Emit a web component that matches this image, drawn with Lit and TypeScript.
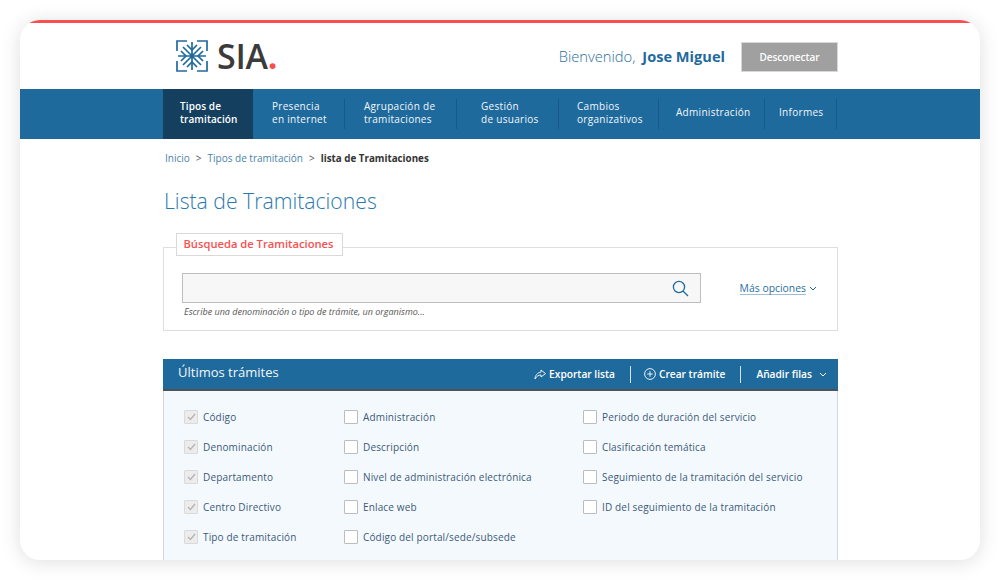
import {css, html, LitElement} from 'lit';
import {customElement} from 'lit/decorators.js';

const NAV = [
  {lines: ['Tipos de', 'tramitación'], width: 90, pad: 17, active: true},
  {lines: ['Presencia', 'en internet'], width: 92, pad: 19},
  {lines: ['Agrupación de', 'tramitaciones'], width: 112, pad: 19},
  {lines: ['Gestión', 'de usuarios'], width: 102, pad: 24},
  {lines: ['Cambios', 'organizativos'], width: 100, pad: 18},
  {lines: ['Administración'], width: 106, pad: 17},
  {lines: ['Informes'], width: 72, pad: 14},
];

const COLUMNS = [
  {width: 160, checked: true, items: ['Código', 'Denominación', 'Departamento', 'Centro Directivo', 'Tipo de tramitación']},
  {width: 239, checked: false, items: ['Administración', 'Descripción', 'Nivel de administración electrónica', 'Enlace web', 'Código del portal/sede/subsede']},
  {width: 240, checked: false, items: ['Periodo de duración del servicio', 'Clasificación temática', 'Seguimiento de la tramitación del servicio', 'ID del seguimiento de la tramitación']},
];

@customElement('app-root')
export class AppRoot extends LitElement {
  static override styles = css`
    :host {
      display: block;
      width: 1000px;
      height: 580px;
      padding: 20px;
      box-sizing: border-box;
      background: #fff;
      font-family: "Open Sans", sans-serif;
      color: #333;
    }

    .window {
      height: 540px;
      border-radius: 20px;
      overflow: hidden;
      background: #fff;
      box-shadow: 0 2px 20px rgba(0, 0, 0, 0.13);
    }

    .strip {
      height: 3px;
      background: #f9504f;
    }

    .top {
      height: 66px;
      width: 675px;
      margin-left: 143px;
      display: flex;
      align-items: center;
      justify-content: space-between;
    }

    .logo {
      display: flex;
      align-items: center;
      gap: 9px;
      margin-left: 13px;
    }

    .logo svg {
      display: block;
    }

    .brand {
      font-size: 34px;
      line-height: 32px;
      font-weight: 600;
      color: #3b3b3b;
      letter-spacing: -0.3px;
    }

    .brand b {
      color: #f9504f;
      font-weight: 700;
    }

    .user {
      display: flex;
      align-items: center;
    }

    .hello {
      font-size: 14.7px;
      font-weight: 300;
      color: #2a6f9f;
      margin-left: -1px;
    }

    .name {
      font-size: 14.6px;
      font-weight: 700;
      color: #1f6a9c;
      margin-left: 7px;
    }

    .logout {
      width: 97px;
      height: 30px;
      margin: 2px 0 0 16px;
      box-sizing: border-box;
      border: 1px solid #d8d8d8;
      background: #a0a0a0;
      color: #fff;
      font-size: 10px;
      font-weight: 600;
      display: flex;
      align-items: center;
      justify-content: center;
    }

    .nav {
      height: 50px;
      background: #1f6a9c;
      padding-left: 143px;
      display: flex;
    }

    .nav-item {
      box-sizing: border-box;
      display: flex;
      flex-direction: column;
      justify-content: center;
      padding-bottom: 3px;
      color: #f2f7fb;
      font-size: 10px;
      line-height: 13px;
      letter-spacing: 0.3px;
      position: relative;
    }

    .nav-item::after {
      content: "";
      position: absolute;
      right: 0;
      top: 10px;
      bottom: 10px;
      width: 1px;
      background: #175a87;
    }

    .nav-item.active {
      background: #143f5f;
      color: #fff;
      font-weight: 600;
      letter-spacing: 0.1px;
    }

    .nav-item.active::after {
      display: none;
    }

    .main {
      width: 675px;
      margin-left: 143px;
    }

    .crumbs {
      display: flex;
      align-items: center;
      height: 38px;
      padding-left: 2px;
      font-size: 10px;
      color: #4a83ab;
    }

    .crumbs i {
      font-style: normal;
      color: #555;
      margin: 0 6px;
    }

    .crumbs strong {
      color: #333;
      font-size: 9.8px;
      font-weight: 700;
    }

    h1 {
      margin: 0;
      padding-left: 1px;
      height: 70px;
      font-size: 21.2px;
      line-height: 48px;
      font-weight: 300;
      color: #2a79ad;
    }

    .search {
      position: relative;
      height: 84px;
      box-sizing: border-box;
      border: 1px solid #dedede;
      padding: 25px 20px 0 18px;
    }

    .tab {
      position: absolute;
      left: 12px;
      top: -15px;
      width: 167px;
      height: 23px;
      box-sizing: border-box;
      border: 1px solid #d9d9d9;
      padding-right: 2px;
      background: #fff;
      color: #f9504f;
      font-size: 11.2px;
      font-weight: 600;
      line-height: 19px;
      text-align: center;
    }

    .search-row {
      display: flex;
      align-items: center;
      justify-content: space-between;
    }

    .input {
      width: 519px;
      height: 30px;
      box-sizing: border-box;
      border: 1px solid #bdbdbd;
      background: #f7f7f7;
      display: flex;
      align-items: center;
      justify-content: flex-end;
      padding-right: 11px;
    }

    .more {
      display: flex;
      align-items: center;
      gap: 3px;
      font-size: 10.4px;
      color: #2a6f9f;
    }

    .more span {
      border-bottom: 1px solid #9dbdd4;
      line-height: 12px;
    }

    .hint {
      margin: 3px 0 0 2px;
      font-size: 9px;
      line-height: 12px;
      font-style: italic;
      color: #555;
    }

    .panel {
      margin-top: 28px;
    }

    .panel-head {
      height: 32px;
      box-sizing: border-box;
      background: #1f6a9c;
      border-bottom: 2px solid #4f5356;
      display: flex;
      align-items: center;
      justify-content: space-between;
      padding: 0 11px 0 15px;
      color: #fff;
    }

    .panel-title {
      font-size: 13px;
      color: #f2f7fb;
      margin-top: -5px;
    }

    .actions {
      display: flex;
      align-items: center;
      font-size: 10.2px;
      font-weight: 600;
    }

    .action {
      display: flex;
      align-items: center;
      gap: 3px;
    }

    .sep {
      width: 1px;
      height: 17px;
      background: #d5e4ef;
      margin: 0 15px;
    }

    .sep.first {
      margin-right: 13px;
    }

    .panel-body {
      height: 200px;
      box-sizing: border-box;
      background: #f4f9fe;
      border: 1px solid #cfd6dc;
      border-top: 0;
      display: flex;
      padding: 11px 0 0 20px;
    }

    .check {
      display: flex;
      align-items: center;
      height: 30px;
      gap: 5px;
      font-size: 10px;
      letter-spacing: 0.15px;
      color: #3d5a78;
      white-space: nowrap;
    }

    .box {
      width: 14px;
      height: 14px;
      box-sizing: border-box;
      flex: none;
      background: #fff;
      border: 1px solid #bcbcbc;
      border-radius: 1px;
      display: flex;
      align-items: center;
      justify-content: center;
    }

    .box.on {
      background: #ececec;
      border-color: #dadada;
    }
  `;

  override render() {
    return html`
      <div class="window">
        <div class="strip"></div>
        <div class="top">
          <div class="logo">
            <svg width="32" height="32" viewBox="0 0 32 32" fill="none" stroke="#1f6a9c" stroke-width="1.7">
              <path d="M11 1H1V11M21 1H31V11M1 21V31H11M31 21V31H21"/>
              <path d="M16 2V30M2 16H30M7 7L25 25M25 7L7 25"/>
              <path d="M11 5L16 10L21 5M11 27L16 22L21 27M5 11L10 16L5 21M27 11L22 16L27 21"/>
            </svg>
            <div class="brand">SIA<b>.</b></div>
          </div>
          <div class="user">
            <span class="hello">Bienvenido,</span>
            <span class="name">Jose Miguel</span>
            <div class="logout">Desconectar</div>
          </div>
        </div>
        <nav class="nav">
          ${NAV.map(
            (item) => html`
              <div
                class="nav-item ${item.active ? 'active' : ''}"
                style="width:${item.width}px;padding-left:${item.pad}px"
              >
                ${item.lines.map((line) => html`<span>${line}</span>`)}
              </div>
            `
          )}
        </nav>
        <div class="main">
          <div class="crumbs">
            <span>Inicio</span><i>&gt;</i><span>Tipos de tramitación</span><i>&gt;</i>
            <strong>lista de Tramitaciones</strong>
          </div>
          <h1>Lista de Tramitaciones</h1>
          <section class="search">
            <div class="tab">Búsqueda de Tramitaciones</div>
            <div class="search-row">
              <div class="input">
                <svg width="17" height="17" viewBox="0 0 17 17" fill="none" stroke="#1f6a9c" stroke-width="1.3">
                  <circle cx="7" cy="7" r="5.6"/>
                  <path d="M11 11L16 16"/>
                </svg>
              </div>
              <div class="more">
                <span>Más opciones</span>
                <svg width="8" height="5" viewBox="0 0 8 5" fill="none" stroke="#1f6a9c" stroke-width="1">
                  <path d="M1 1L4 4L7 1"/>
                </svg>
              </div>
            </div>
            <p class="hint">Escribe una denominación o tipo de trámite, un organismo...</p>
          </section>
          <section class="panel">
            <div class="panel-head">
              <div class="panel-title">Últimos trámites</div>
              <div class="actions">
                <div class="action">
                  <svg width="12" height="11" viewBox="0 0 12 11" fill="none" stroke="#fff" stroke-width="0.9">
                    <path d="M7 1L11.5 4.6L7 8V6C4.5 6 2.5 7.3 1 10C1 6.5 3.5 3.5 7 3.2Z"/>
                  </svg>
                  Exportar lista
                </div>
                <div class="sep first"></div>
                <div class="action">
                  <svg width="12" height="12" viewBox="0 0 12 12" fill="none" stroke="#fff" stroke-width="0.9">
                    <circle cx="6" cy="6" r="5.4"/>
                    <path d="M6 3.2V8.8M3.2 6H8.8"/>
                  </svg>
                  Crear trámite
                </div>
                <div class="sep"></div>
                <div class="action">
                  Añadir filas
                  <svg style="margin-left:4px" width="8" height="5" viewBox="0 0 8 5" fill="none" stroke="#fff" stroke-width="1">
                    <path d="M1 1L4 4L7 1"/>
                  </svg>
                </div>
              </div>
            </div>
            <div class="panel-body">
              ${COLUMNS.map(
                (col) => html`
                  <div style="width:${col.width}px">
                    ${col.items.map(
                      (label) => html`
                        <div class="check">
                          <span class="box ${col.checked ? 'on' : ''}">
                            ${col.checked
                              ? html`<svg width="9" height="8" viewBox="0 0 9 8" fill="none" stroke="#b5b5b5" stroke-width="1.4"><path d="M1 4L3.5 6.5L8 1"/></svg>`
                              : ''}
                          </span>
                          ${label}
                        </div>
                      `
                    )}
                  </div>
                `
              )}
            </div>
          </section>
        </div>
      </div>
    `;
  }
}

declare global {
  interface HTMLElementTagNameMap {
    'app-root': AppRoot;
  }
}
